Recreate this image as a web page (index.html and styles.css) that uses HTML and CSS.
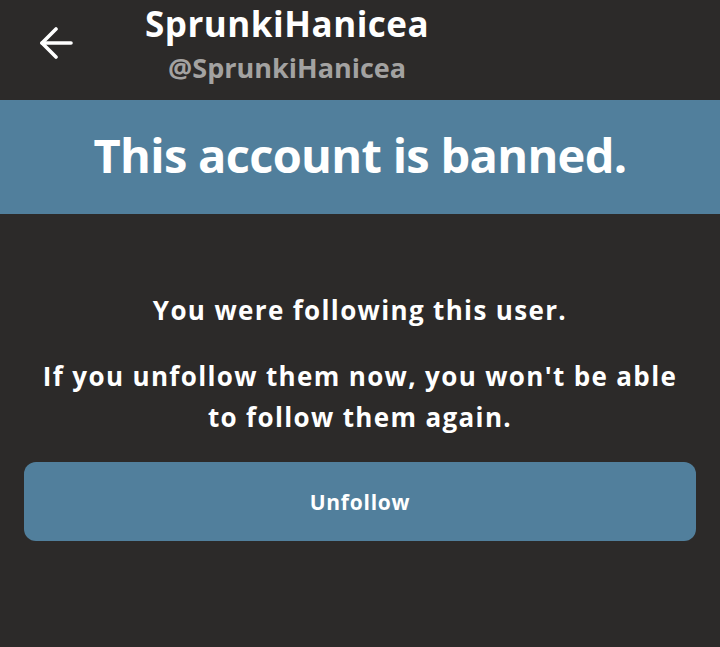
FILE: index.html
```html
<!DOCTYPE html>
<html>
<head>
<meta charset="utf-8">
<link rel="stylesheet" href="styles.css">
</head>
<body>
<div class="app">
  <header class="topbar">
    <button class="back" aria-label="Back">
      <svg width="34" height="32" viewBox="0 0 34 32" fill="none" stroke="#fff" stroke-width="3.6" stroke-linecap="round" stroke-linejoin="round">
        <path d="M32 16H3"/>
        <path d="M17 2L3 16l14 14"/>
      </svg>
    </button>
    <div class="names">
      <div class="name">SprunkiHanicea</div>
      <div class="handle">@SprunkiHanicea</div>
    </div>
  </header>
  <div class="banner">This account is banned.</div>
  <main class="content">
    <p class="msg first">You were following this user.</p>
    <p class="msg">If you unfollow them now, you won't be able<br>to follow them again.</p>
    <button class="unfollow">Unfollow</button>
  </main>
</div>
</body>
</html>
```
FILE: styles.css
```css
html, body {
  margin: 0;
  padding: 0;
  background: #2c2a29;
}
body {
  font-family: "Open Sans", "Noto Sans", sans-serif;
  color: #fff;
  width: 720px;
  height: 647px;
  overflow: hidden;
}
.topbar {
  height: 100px;
  display: flex;
  align-items: flex-start;
}
.back {
  background: none;
  border: 0;
  padding: 0;
  margin: 27px 0 0 39px;
  width: 34px;
  height: 32px;
  display: flex;
}
.names {
  margin-left: 72px;
  display: flex;
  flex-direction: column;
  align-items: center;
}
.name {
  font-weight: 700;
  font-size: 35px;
  line-height: 44px;
  letter-spacing: 0.5px;
  margin-top: 2px;
}
.handle {
  font-weight: 700;
  font-size: 27px;
  line-height: 32px;
  color: #a3a2a1;
  margin-top: 6px;
}
.banner {
  background: #517f9c;
  height: 114px;
  box-sizing: border-box;
  padding-bottom: 5px;
  display: flex;
  align-items: center;
  justify-content: center;
  font-weight: 700;
  font-size: 47px;
  letter-spacing: -0.7px;
}
.content {
  padding: 76px 24px 0;
  display: flex;
  flex-direction: column;
  align-items: center;
}
.msg {
  margin: 0;
  font-weight: 700;
  font-size: 26px;
  line-height: 41px;
  letter-spacing: 1.35px;
  text-align: center;
}
.msg.first {
  margin-bottom: 25px;
}
.unfollow {
  margin-top: 24px;
  width: 672px;
  height: 79px;
  border: 0;
  border-radius: 12px;
  background: #517f9c;
  color: #fff;
  font-family: inherit;
  font-weight: 700;
  font-size: 21px;
  letter-spacing: 0.75px;
}
```
